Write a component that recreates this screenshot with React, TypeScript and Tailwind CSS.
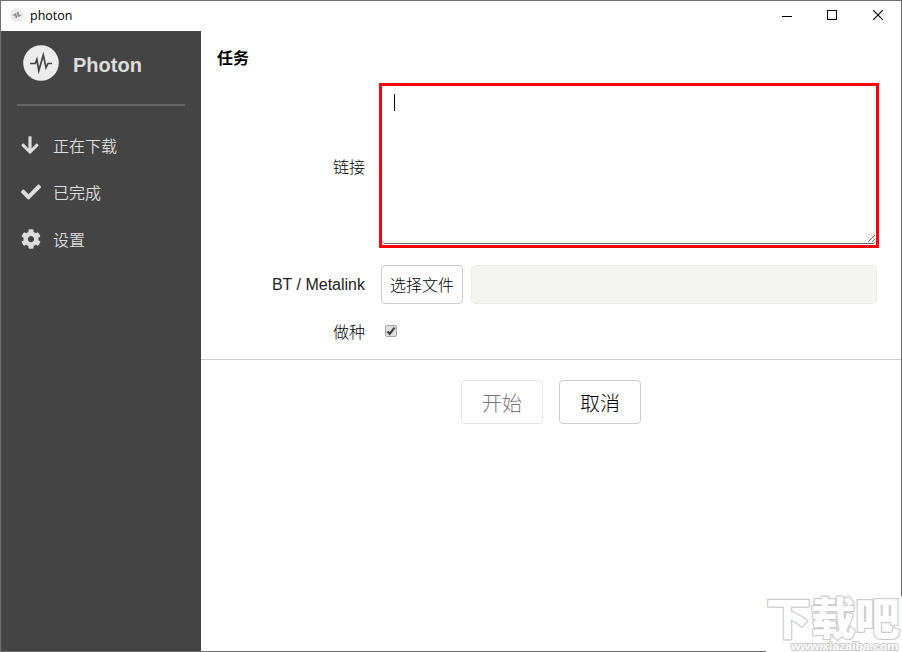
import { useState } from 'react';
import { FaArrowDown, FaCheck, FaCog } from 'react-icons/fa';

const NAV_ITEMS = [
  { id: 'active', label: '正在下载', icon: FaArrowDown },
  { id: 'completed', label: '已完成', icon: FaCheck },
  { id: 'settings', label: '设置', icon: FaCog },
];

function Logo({ className }: { className?: string }) {
  return (
    <svg viewBox="0 0 36 36" className={className} fill="none">
      <circle cx="18" cy="18" r="17.8" fill="#ececec" />
      <path
        d="M7 18.5H12.2L13.9 14.4L15.8 25.6L20.3 10L23 22.6L25 18.5H29"
        stroke="#444"
        strokeWidth="1.7"
        strokeLinejoin="miter"
        strokeMiterlimit="12"
      />
    </svg>
  );
}

function TitleBar() {
  return (
    <header className="flex h-[30px] shrink-0 items-center bg-white pl-[9px] text-black">
      <Logo className="mb-[2px] h-[14px] w-[14px]" />
      <span className="ml-[6px] font-['Open_Sans',sans-serif] text-[12.5px] leading-[30px]">photon</span>
      <div className="ml-auto flex h-full">
        <button className="flex w-[45px] items-center justify-center" title="Minimize">
          <svg width="10" height="10" viewBox="0 0 10 10" shapeRendering="crispEdges">
            <path d="M0 5.5H10" stroke="#000" />
          </svg>
        </button>
        <button className="flex w-[45px] items-center justify-center pb-[2px]" title="Maximize">
          <svg width="10" height="10" viewBox="0 0 10 10" fill="none" shapeRendering="crispEdges">
            <rect x=".5" y=".5" width="9" height="9" stroke="#000" />
          </svg>
        </button>
        <button className="flex w-[47px] items-center justify-center pb-[2px]" title="Close">
          <svg width="10" height="10" viewBox="0 0 10 10" fill="none">
            <path d="M0 0L10 10M10 0L0 10" stroke="#000" strokeWidth="1.1" />
          </svg>
        </button>
      </div>
    </header>
  );
}

function Sidebar() {
  return (
    <aside className="w-[200px] shrink-0 bg-[#444] px-4 text-[#ddd]">
      <div className="flex h-[75px] items-start border-b-2 border-[#666] pl-[6px] pt-[14px]">
        <Logo className="h-9 w-9" />
        <h1 className="ml-[14px] mt-[5px] text-xl leading-[30px] font-bold">Photon</h1>
      </div>
      <nav className="mt-[17px]">
        {NAV_ITEMS.map(({ id, label, icon: Icon }) => (
          <a key={id} className="flex h-[47px] items-center pl-1">
            <span className="-mt-1 flex w-5 justify-start">
              <Icon className={id === 'active' ? '-ml-px h-5 w-5' : 'h-5 w-5'} />
            </span>
            <span className="ml-3 text-base leading-6 font-[350]">{label}</span>
          </a>
        ))}
      </nav>
    </aside>
  );
}

function TaskForm() {
  const [links, setLinks] = useState('');
  const [seeding, setSeeding] = useState(true);

  return (
    <main className="min-w-0 flex-1 bg-white font-light text-black">
      <h2 className="h-[52px] pl-4 pt-4 text-base leading-6 font-bold">任务</h2>

      <div className="flex h-[165px] items-center pr-[22px]">
        <label className="mr-[14px] w-[164px] pt-[5px] text-right">链接</label>
        <div className="relative h-full flex-1 border-[3px] border-[#f00]">
          <textarea
            value={links}
            onChange={(e) => setLinks(e.target.value)}
            className="block h-[158px] w-full resize rounded border-b border-[#666] px-3 py-2 outline-none"
          />
          {/* caret */}
          <span className="absolute left-3 top-2 h-[17px] w-px bg-black" />
        </div>
      </div>

      <div className="mt-[17px] flex h-[39px] items-center pr-6">
        <label className="mr-4 w-[164px] text-right text-[#222]">BT / Metalink</label>
        <button className="h-[39px] w-[82px] rounded border border-[#ccc] pt-[2px]">选择文件</button>
        <div className="ml-2 h-[39px] flex-1 rounded-[5px] border border-[#ebebe9] bg-[#f4f5f0]" />
      </div>

      <div className="flex h-14 items-center border-b border-[#ccc]">
        <label className="mr-5 w-[164px] pt-[2px] text-right">做种</label>
        <button
          onClick={() => setSeeding(!seeding)}
          className="-mt-px flex h-3 w-3 items-center justify-center rounded-[2px] border border-[#a5a5a5] bg-[#dedede]"
        >
          {seeding && (
            <svg width="10" height="10" viewBox="0 0 10 10" fill="none">
              <path d="M1.4 5.4L3.7 7.8L8.5 1.6" stroke="#3c3c3c" strokeWidth="2.1" />
            </svg>
          )}
        </button>
      </div>

      <div className="mt-5 flex justify-center gap-4 text-xl">
        <button className="h-11 w-[82px] rounded border border-[#e5e5e5] pt-[3px] text-[#777]">开始</button>
        <button className="h-11 w-[82px] rounded border border-[#ccc] pt-[3px]">取消</button>
      </div>
    </main>
  );
}

function Watermark() {
  return (
    <svg
      className="absolute -right-px -bottom-px overflow-visible"
      width="136"
      height="56"
      viewBox="0 0 136 56"
    >
      <rect width="136" height="56" fill="#fff" />
      <g fill="#fff" stroke="#ccc" paintOrder="stroke" strokeLinejoin="round">
        <text
          x="0"
          y="39"
          fontSize="44"
          fontWeight="900"
          strokeWidth="2.4"
          textLength="134"
          lengthAdjust="spacingAndGlyphs"
          className="font-['Noto_Sans_CJK_SC',sans-serif]"
        >
          下载吧
        </text>
        <text
          x="25"
          y="53.5"
          fontSize="11"
          fontWeight="700"
          strokeWidth="1.8"
          textLength="107"
          lengthAdjust="spacingAndGlyphs"
          className="font-['Liberation_Sans',sans-serif]"
        >
          www.xiazaiba.com
        </text>
      </g>
    </svg>
  );
}

export default function App() {
  return (
    <div className="relative flex h-[652px] w-[902px] flex-col border border-[#707070] font-['Liberation_Sans','Noto_Sans_CJK_SC',sans-serif] text-base">
      <TitleBar />
      <div className="flex flex-1">
        <Sidebar />
        <TaskForm />
      </div>
      <Watermark />
    </div>
  );
}
